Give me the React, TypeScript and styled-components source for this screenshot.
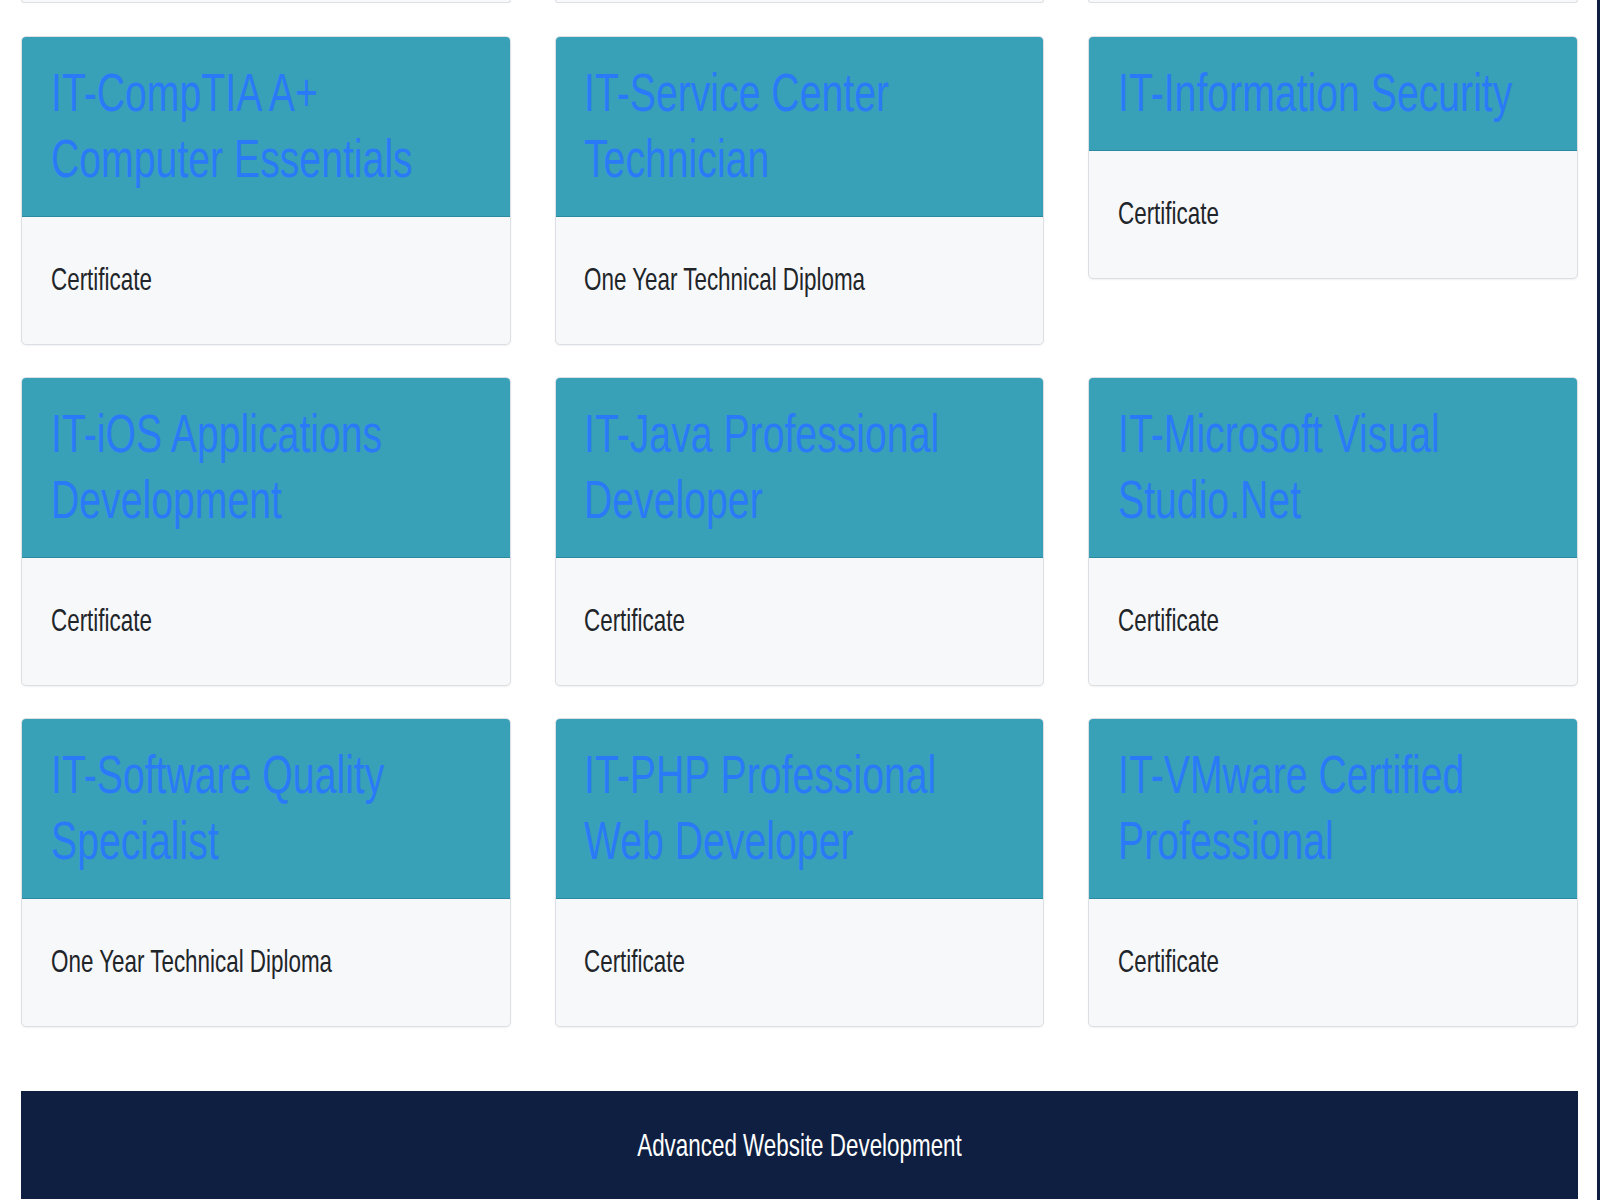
import React from 'react';
import styled, { createGlobalStyle } from 'styled-components';

const GlobalStyle = createGlobalStyle`
  html, body {
    margin: 0;
    padding: 0;
    background: #fff;
  }
  body {
    font-family: "Liberation Sans", Arial, sans-serif;
    color: #212529;
  }
`;

// the capture is squeezed sideways, so text is drawn narrow
const SQUEEZE = 0.7;
const TITLE_SQUEEZE = 0.726;

const Page = styled.div`
  display: flex;
  min-height: 1200px;
`;

const Main = styled.main`
  flex: 1;
  padding: 0 19px 0 21px;
`;

const EdgeBar = styled.div`
  width: 3px;
  background: #0e1f42;
  flex-shrink: 0;
`;

const Grid = styled.div`
  display: grid;
  grid-template-columns: repeat(3, 1fr);
  column-gap: 44px;
  row-gap: 32px;
  align-items: start;
`;

const TopStrip = styled(Grid)`
  margin-bottom: 33px;
`;

const Stub = styled.div`
  height: 2px;
  background: #f8f9fa;
  border: 1px solid #dcdfe3;
  border-top: none;
  border-radius: 0 0 5px 5px;
`;

const Card = styled.div`
  background: #f7f8fa;
  border: 1px solid #dcdfe3;
  border-radius: 5px;
  overflow: hidden;
  box-shadow: 0 1px 2px rgba(0, 0, 0, 0.06);
`;

const CardHeader = styled.div`
  background: #39a1b7;
  border-bottom: 1px solid #2a8a9e;
  padding: 21.5px 28.5px 25.5px;
`;

const Squeeze = styled.span<{ $k: number }>`
  display: block;
  width: calc(100% / 0.72);
  transform: scaleX(${p => p.$k});
  transform-origin: left top;
`;

const Title = styled.h2`
  margin: 0;
  font-size: 54px;
  line-height: 66px;
  font-weight: 400;
  color: #2a7af8;
`;

const CardBody = styled.div`
  padding: 38px 28.5px 41px;
`;

const BodyText = styled.p`
  margin: 0;
  font-size: 32px;
  line-height: 48px;
  color: #212529;
  white-space: nowrap;
`;

const Footer = styled.footer`
  margin-top: 64px;
  background: #0e1f42;
  padding: 30px 20px;
  text-align: center;
`;

const FooterText = styled.p`
  margin: 0;
  font-size: 32px;
  line-height: 48px;
  color: #fff;
  transform: scaleX(${SQUEEZE});
`;

type Program = { title: string; kind: string };

const programs: Program[] = [
  { title: 'IT-CompTIA A+ Computer Essentials', kind: 'Certificate' },
  { title: 'IT-Service Center Technician', kind: 'One Year Technical Diploma' },
  { title: 'IT-Information Security', kind: 'Certificate' },
  { title: 'IT-iOS Applications Development', kind: 'Certificate' },
  { title: 'IT-Java Professional Developer', kind: 'Certificate' },
  { title: 'IT-Microsoft Visual Studio.Net', kind: 'Certificate' },
  { title: 'IT-Software Quality Specialist', kind: 'One Year Technical Diploma' },
  { title: 'IT-PHP Professional Web Developer', kind: 'Certificate' },
  { title: 'IT-VMware Certified Professional', kind: 'Certificate' },
];

function ProgramCard({ title, kind }: Program) {
  return (
    <Card>
      <CardHeader>
        <Title>
          <Squeeze $k={TITLE_SQUEEZE}>{title}</Squeeze>
        </Title>
      </CardHeader>
      <CardBody>
        <BodyText>
          <Squeeze $k={SQUEEZE}>{kind}</Squeeze>
        </BodyText>
      </CardBody>
    </Card>
  );
}

export default function App() {
  return (
    <>
      <GlobalStyle />
      <Page>
        <Main>
          <TopStrip>
            <Stub />
            <Stub />
            <Stub />
          </TopStrip>
          <Grid>
            {programs.map(p => (
              <ProgramCard key={p.title} {...p} />
            ))}
          </Grid>
          <Footer>
            <FooterText>Advanced Website Development</FooterText>
          </Footer>
        </Main>
        <EdgeBar />
      </Page>
    </>
  );
}
